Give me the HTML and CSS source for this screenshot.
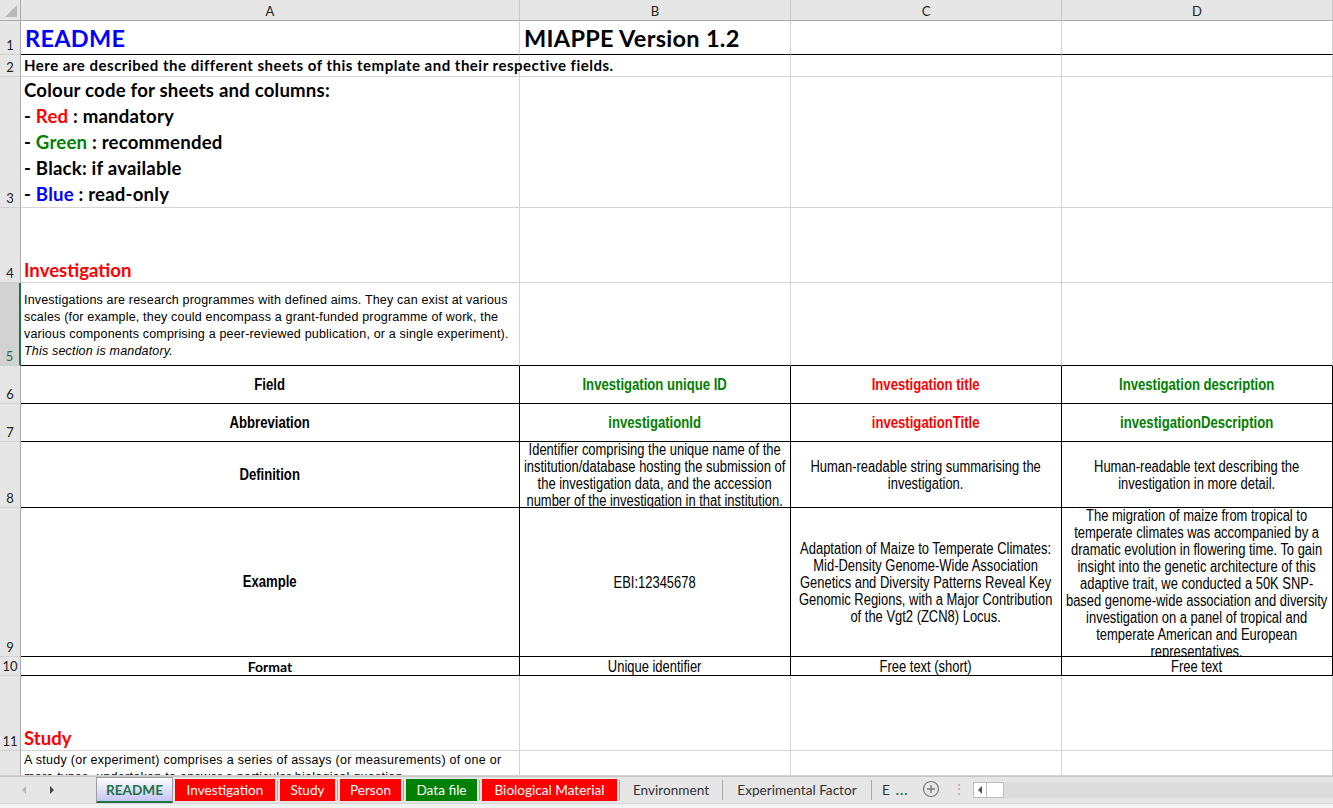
FILE: index.html
```html
<!DOCTYPE html>
<html>
<head>
<meta charset="utf-8">
<link rel="stylesheet" href="styles.css">
</head>
<body>
<div class="app">
  <div class="sheet">
    <!-- header row -->
    <div class="corner"><svg width="20" height="20" viewBox="0 0 20 20"><polygon points="17,5 17,17 5,17" fill="#b9b9b9"/></svg></div>
    <div class="colh">A</div>
    <div class="colh">B</div>
    <div class="colh">C</div>
    <div class="colh">D</div>

    <!-- row 1 -->
    <div class="rowh">1</div>
    <div class="c b-black title blue">README</div>
    <div class="c b-black title">MIAPPE Version 1.2</div>
    <div class="c b-black"></div>
    <div class="c b-black"></div>

    <!-- row 2 -->
    <div class="rowh">2</div>
    <div class="c intro">Here are described the different sheets of this template and their respective fields.</div>
    <div class="c"></div>
    <div class="c"></div>
    <div class="c"></div>

    <!-- row 3 -->
    <div class="rowh">3</div>
    <div class="c legend">
      <div>
        <div>Colour code for sheets and columns:</div>
        <div>- <span class="red">Red</span> : mandatory</div>
        <div>- <span class="green">Green</span> : recommended</div>
        <div>- Black: if available</div>
        <div>- <span class="blue">Blue</span> : read-only</div>
      </div>
    </div>
    <div class="c"></div>
    <div class="c"></div>
    <div class="c"></div>

    <!-- row 4 -->
    <div class="rowh">4</div>
    <div class="c section red">Investigation</div>
    <div class="c"></div>
    <div class="c"></div>
    <div class="c"></div>

    <!-- row 5 -->
    <div class="rowh sel">5</div>
    <div class="c b-black para"><div>Investigations are research programmes with defined aims. They can exist at various<br>scales (for example, they could encompass a grant-funded programme of work, the<br>various components comprising a peer-reviewed publication, or a single experiment).<br><i>This section is mandatory.</i></div></div>
    <div class="c b-black"></div>
    <div class="c b-black"></div>
    <div class="c b-black"></div>

    <!-- row 6 -->
    <div class="rowh">6</div>
    <div class="c t th"><div class="n">Field</div></div>
    <div class="c t th green"><div class="n">Investigation unique ID</div></div>
    <div class="c t th red"><div class="n">Investigation title</div></div>
    <div class="c t th green"><div class="n">Investigation description</div></div>

    <!-- row 7 -->
    <div class="rowh">7</div>
    <div class="c t th"><div class="n">Abbreviation</div></div>
    <div class="c t th green"><div class="n">investigationId</div></div>
    <div class="c t th red"><div class="n">investigationTitle</div></div>
    <div class="c t th green"><div class="n">investigationDescription</div></div>

    <!-- row 8 -->
    <div class="rowh">8</div>
    <div class="c t th"><div class="n">Definition</div></div>
    <div class="c t td ovf"><div class="n">Identifier comprising the unique name of the<br>institution/database hosting the submission of<br>the investigation data, and the accession<br>number of the investigation in that institution.</div></div>
    <div class="c t td"><div class="n">Human-readable string summarising the<br>investigation.</div></div>
    <div class="c t td"><div class="n">Human-readable text describing the<br>investigation in more detail.</div></div>

    <!-- row 9 -->
    <div class="rowh">9</div>
    <div class="c t th"><div class="n">Example</div></div>
    <div class="c t td"><div class="n">EBI:12345678</div></div>
    <div class="c t td"><div class="n">Adaptation of Maize to Temperate Climates:<br>Mid-Density Genome-Wide Association<br>Genetics and Diversity Patterns Reveal Key<br>Genomic Regions, with a Major Contribution<br>of the Vgt2 (ZCN8) Locus.</div></div>
    <div class="c t td ovf"><div class="n">The migration of maize from tropical to<br>temperate climates was accompanied by a<br>dramatic evolution in flowering time. To gain<br>insight into the genetic architecture of this<br>adaptive trait, we conducted a 50K SNP-<br>based genome-wide association and diversity<br>investigation on a panel of tropical and<br>temperate American and European<br>representatives.</div></div>

    <!-- row 10 -->
    <div class="rowh">10</div>
    <div class="c t fmt bold">Format</div>
    <div class="c t fmt"><div class="n">Unique identifier</div></div>
    <div class="c t fmt"><div class="n">Free text (short)</div></div>
    <div class="c t fmt"><div class="n">Free text</div></div>

    <!-- row 11 -->
    <div class="rowh">11</div>
    <div class="c section red">Study</div>
    <div class="c"></div>
    <div class="c"></div>
    <div class="c"></div>

    <!-- row 12 -->
    <div class="rowh"></div>
    <div class="c para top"><div>A study (or experiment) comprises a series of assays (or measurements) of one or<br>more types, undertaken to answer a particular biological question.</div></div>
    <div class="c"></div>
    <div class="c"></div>
    <div class="c"></div>
  </div>

  <div class="tabbar">
    <div class="nav">
      <svg width="8" height="10" viewBox="0 0 8 10"><polygon points="6,1 6,9 2,5" fill="#b8b8b8"/></svg>
      <svg width="8" height="10" viewBox="0 0 8 10"><polygon points="2,1 2,9 6,5" fill="#444"/></svg>
    </div>
    <div class="tabs">
      <div class="tab active">README</div>
      <div class="tab redtab w-inv">Investigation</div>
      <div class="sep"></div>
      <div class="tab redtab w-study">Study</div>
      <div class="sep"></div>
      <div class="tab redtab w-person">Person</div>
      <div class="sep"></div>
      <div class="tab greentab w-data">Data file</div>
      <div class="sep"></div>
      <div class="tab redtab w-bio">Biological Material</div>
      <div class="sep"></div>
      <div class="tab plain w-env">Environment</div>
      <div class="sep"></div>
      <div class="tab plain w-exp">Experimental Factor</div>
      <div class="sep"></div>
      <div class="tab plain more">E <span class="dots">...</span></div>
      <div class="add"><svg width="18" height="18" viewBox="0 0 18 18"><circle cx="9" cy="9" r="7.5" fill="none" stroke="#7a7a7a" stroke-width="1.2"/><path d="M9 5v8M5 9h8" stroke="#7a7a7a" stroke-width="1.4"/></svg></div>
      <div class="vdots">⋮</div>
    </div>
    <div class="hscroll">
      <div class="sbtn"><svg width="6" height="8" viewBox="0 0 6 8"><polygon points="5,0 5,8 1,4" fill="#555"/></svg></div>
      <div class="thumb"></div>
    </div>
  </div>
  <div class="status"></div>
</div>
</body>
</html>
```
FILE: styles.css
```css
* { box-sizing: border-box; }
html, body { margin: 0; padding: 0; background: #fff; }
body { font-family: "Liberation Sans", Arial, sans-serif; color: #000; }

.app { width: 1333px; height: 808px; display: flex; flex-direction: column; overflow: hidden; }

.sheet {
  display: grid;
  grid-template-columns: 21px 499px 271px 271px 271px;
  grid-template-rows: 21px 34px 22px 131px 75px 83px 38px 38px 66px 149px 19px 75px 1fr;
  height: 776px;
  overflow: hidden;
  flex: none;
}

.corner { background: #e6e6e6; border-right: 1px solid #ababab; border-bottom: 1px solid #ababab; display: flex; }
.colh {
  background: #e6e6e6; border-right: 1px solid #c8c8c8; border-bottom: 1px solid #ababab;
  font-family: "Lato", "Open Sans", sans-serif; font-size: 13px; color: #222;
  display: flex; align-items: center; justify-content: center; padding-top: 1px;
}
.rowh {
  background: #e6e6e6; border-right: 1px solid #ababab; border-bottom: 1px solid #d0d0d0;
  font-family: "Lato", "Open Sans", sans-serif; font-size: 13px; color: #222;
  display: flex; align-items: flex-end; justify-content: center; padding-bottom: 1px;
}
.rowh.sel { background: #d2d2d2; color: #217346; border-right: 2px solid #217346; }

.c {
  border-right: 1px solid #d4d4d4; border-bottom: 1px solid #d4d4d4;
  display: flex; align-items: flex-end; overflow: hidden; padding: 0 3px 1px 3px;
  white-space: nowrap;
}
.b-black { border-bottom-color: #000; }

.title { font-family: "Lato", "Open Sans", sans-serif; font-weight: 700; font-size: 23.5px; letter-spacing: 0.3px; padding-left: 4px; padding-bottom: 2px; overflow: visible; }
.blue { color: #0000ff; }
.red { color: #ff0000; }
.green { color: #008000; }

.intro { font-family: "Lato", "Open Sans", sans-serif; font-weight: 700; font-size: 15px; letter-spacing: 0.5px; overflow: visible; padding-bottom: 2px; }
.legend { font-family: "Lato", "Open Sans", sans-serif; font-weight: 700; font-size: 18.6px; letter-spacing: 0.2px; line-height: 26px; padding-bottom: 0; padding-top: 1px; }
.section { font-family: "Lato", "Open Sans", sans-serif; font-weight: 700; font-size: 18.6px; padding-bottom: 0; line-height: 24px; }

.para { font-size: 12.5px; letter-spacing: 0.18px; line-height: 17px; padding: 0 3px 5px 3px; }
.para.top { align-items: flex-start; padding-top: 1px; letter-spacing: 0.28px; }

.t { border-right-color: #000; border-bottom-color: #000; justify-content: center; align-items: center; text-align: center; padding: 0; }
.n { flex: none; width: calc(100% / 0.82); transform: scaleX(0.82); text-align: center; }
.th { font-family: "Liberation Sans", Arial, sans-serif; font-weight: 700; font-size: 16px; }
.td { font-family: "Liberation Sans", Arial, sans-serif; font-size: 15.8px; line-height: 17px; }
.td.ovf { align-items: flex-start; }
.td.ovf .n { margin-top: -1px; }
.fmt { font-family: "Liberation Sans", Arial, sans-serif; font-size: 15.8px; line-height: 17px; }
.fmt.bold { font-weight: 700; font-family: "Lato", "Open Sans", sans-serif; font-size: 14px; }

.tabbar {
  height: 27px; flex: none; background: #e6e6e6; border-top: 1px solid #c6c6c6;
  display: flex; align-items: flex-start;
  font-family: "Lato", "Open Sans", sans-serif; font-size: 13.6px;
}
.nav { width: 96px; flex: none; display: flex; gap: 20px; padding: 8px 0 0 20px; }
.tabs { display: flex; align-items: flex-start; flex: none; }
.tab { height: 22px; display: flex; align-items: center; justify-content: center; white-space: nowrap; margin-top: 2px; }
.tab.active {
  background: linear-gradient(#fdfdff, #c4c4f4); color: #217346; font-weight: 700;
  border: 1px solid #9f9f9f; border-bottom: 2px solid #217346; margin-top: 0; height: 26px; width: 77px;
}
.redtab { background: #ff0000; color: #fff; }
.greentab { background: #008000; color: #fff; }
.w-inv { width: 100px; margin-left: 2px; }
.w-study { width: 55px; }
.w-person { width: 61px; }
.w-data { width: 71px; }
.w-bio { width: 135px; }
.w-env { width: 98px; }
.w-exp { width: 144px; }
.plain { color: #333; }
.sep { width: 1px; height: 20px; background: #a8a8a8; margin: 3px 2px 0 2px; }
.more { padding: 0 0 0 8px; gap: 6px; width: 40px; justify-content: flex-start; }
.dots { color: #217346; font-weight: 700; letter-spacing: 1px; }
.add { margin: 3px 0 0 8px; }
.vdots { color: #b0b0b0; margin: 3px 0 0 12px; font-size: 14px; }
.hscroll { flex: 1; margin: 5px 0 0 7px; height: 16px; background: #dcdcdc; display: flex; }
.sbtn { width: 14px; height: 16px; background: #fff; border: 1px solid #bdbdbd; display: flex; align-items: center; justify-content: center; }
.thumb { width: 17px; height: 16px; background: #fff; border: 1px solid #bdbdbd; border-left: none; }
.status { flex: 1; background: #f3f3f3; border-top: 1px solid #d6d6d6; }
```
